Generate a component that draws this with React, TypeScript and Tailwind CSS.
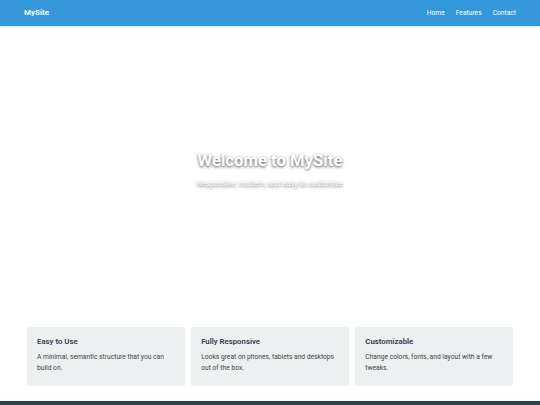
import React from "react";

const features = [
  {
    title: "Easy to Use",
    text: "A minimal, semantic structure that you can build on.",
  },
  {
    title: "Fully Responsive",
    text: "Looks great on phones, tablets and desktops out of the box.",
  },
  {
    title: "Customizable",
    text: "Change colors, fonts, and layout with a few tweaks.",
  },
];

export default function App() {
  return (
    <div className="min-h-screen bg-white font-['Roboto',sans-serif] flex flex-col">
      <header className="h-[26px] bg-[#3498db] px-[24px] flex items-center justify-between text-white shadow-[0_1px_2px_rgba(0,0,0,0.15)]">
        <span className="font-bold text-[8px]">MySite</span>
        <nav className="flex gap-[11px] text-[6.7px]">
          <a>Home</a>
          <a>Features</a>
          <a>Contact</a>
        </nav>
      </header>

      <section className="h-[284px] flex flex-col items-center justify-center text-white text-center">
        <h1 className="mt-[4px] font-bold text-[16.7px] leading-tight [text-shadow:0_1px_3px_rgba(0,0,0,0.7)]">
          Welcome to MySite
        </h1>
        <p className="mt-[6px] text-[7.5px] [text-shadow:0_1px_3px_rgba(0,0,0,0.7)]">
          Responsive, modern, and easy to customize
        </p>
      </section>

      <main className="px-[27px] pt-[17px] pb-[16px] grid grid-cols-3 gap-[6.5px]">
        {features.map((f, i) => (
          <div
            key={i}
            className="bg-[#ecf0f1] rounded-[3px] h-[58px] px-[10px] pt-[10px] shadow-[0_1px_2px_rgba(0,0,0,0.06)]"
          >
            <h3 className="text-[#2c3e50] font-semibold text-[7.8px] leading-[10px]">
              {f.title}
            </h3>
            <p className="mt-[5px] text-[#444] text-[6.7px] leading-[10.5px]">
              {f.text}
            </p>
          </div>
        ))}
      </main>

      <footer className="h-[40px] bg-[#2c3e50]" />
    </div>
  );
}
